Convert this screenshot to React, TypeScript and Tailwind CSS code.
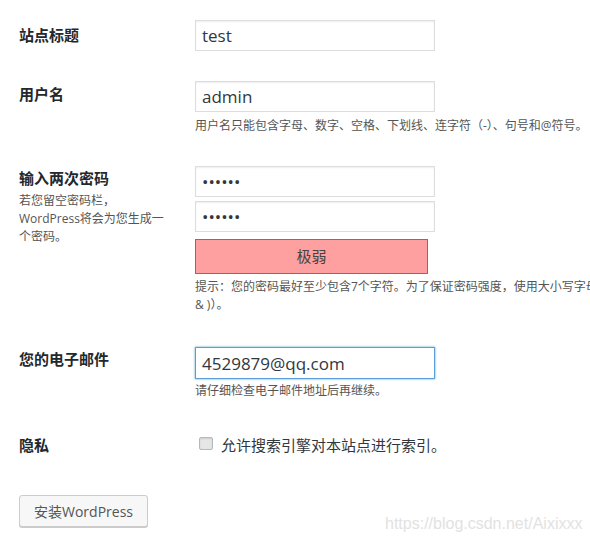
import React from 'react';

const font = { fontFamily: '"Open Sans", "Noto Sans CJK SC", sans-serif' };

function TextInput({ value, type = 'text', focused = false, h = 'h-[31px]' }: { value: string; type?: string; focused?: boolean; h?: string }) {
  return (
    <input
      type={type}
      defaultValue={value}
      readOnly
      className={`block w-[240px] ${h} px-[6px] text-[17px] text-[#32373c] bg-white outline-none border ${
        focused
          ? 'border-[#5b9dd9] shadow-[0_0_2px_rgba(30,140,190,0.8)]'
          : 'border-[#dddddd] shadow-[inset_0_1px_2px_rgba(0,0,0,0.07)]'
      }`}
      style={font}
    />
  );
}

export default function App() {
  return (
    <div className="relative w-[590px] h-[542px] overflow-hidden bg-white text-[#32373c]" style={font}>
      <div className="pl-[19px]">
        {/* 站点标题 */}
        <div className="flex pt-[20px]">
          <div className="w-[176px] shrink-0 pt-[5px] text-[15px] leading-[21px] font-bold text-[#23282d]">站点标题</div>
          <TextInput value="test" />
        </div>

        {/* 用户名 */}
        <div className="flex mt-[30px]">
          <div className="w-[176px] shrink-0 pt-[3px] text-[15px] leading-[21px] font-bold text-[#23282d]">用户名</div>
          <div>
            <TextInput value="admin" />
            <p className="mt-[5px] text-[12px] leading-[18px] text-[#555] whitespace-nowrap">
              用户名只能包含字母、数字、空格、下划线、连字符（-）、句号和@符号。
            </p>
          </div>
        </div>

        {/* 密码 */}
        <div className="flex mt-[31px]">
          <div className="w-[176px] shrink-0 pt-[2px]">
            <div className="text-[15px] leading-[21px] font-bold text-[#23282d]">输入两次密码</div>
            <p className="mt-[3px] text-[12px] leading-[18px] text-[#555]">
              若您留空密码栏，
              <br />
              WordPress将会为您生成一
              <br />
              个密码。
            </p>
          </div>
          <div>
            <TextInput value="123456" type="password" />
            <div className="mt-[4px]">
              <TextInput value="123456" type="password" />
            </div>
            <div className="mt-[7px] w-[233px] h-[35px] flex items-center justify-center bg-[#ffa0a0] border border-[#f04040] text-[15px] text-[#444]">
              极弱
            </div>
            <p className="mt-[4px] text-[12px] leading-[18px] text-[#555] whitespace-nowrap">
              提示：您的密码最好至少包含7个字符。为了保证密码强度，使用大小写字母、数字和符号（例如! " ? $ % ^
              <br />& )）。
            </p>
          </div>
        </div>

        {/* 电子邮件 */}
        <div className="flex mt-[33px]">
          <div className="w-[176px] shrink-0 pt-[2px] text-[15px] leading-[21px] font-bold text-[#23282d]">您的电子邮件</div>
          <div>
            <TextInput value="4529879@qq.com" focused h="h-[32px]" />
            <p className="mt-[3px] text-[12px] leading-[18px] text-[#555]">请仔细检查电子邮件地址后再继续。</p>
          </div>
        </div>

        {/* 隐私 */}
        <div className="flex mt-[35px]">
          <div className="w-[176px] shrink-0 text-[15px] leading-[21px] font-bold text-[#23282d]">隐私</div>
          <label className="flex items-center pl-[4px] text-[15px] leading-[21px] text-[#32373c]">
            <span className="block w-[14px] h-[13px] -mt-[5px] rounded-[2px] border border-[#b4b9be] bg-[#e6e6e6] shadow-[inset_0_1px_2px_rgba(0,0,0,0.1)]" />
            <span className="ml-[8px]">允许搜索引擎对本站点进行索引。</span>
          </label>
        </div>

        <button className="mt-[39px] block w-[129px] h-[32px] rounded-[3px] border border-[#cccccc] bg-[#f7f7f7] shadow-[0_1px_0_#cccccc] text-[14px] text-[#555]" style={font}>
          安装WordPress
        </button>
      </div>

      <div
        className="absolute left-[385px] top-[514px] text-[16px] leading-[20px] text-[#e2e2e2] whitespace-nowrap"
        style={{ fontFamily: '"Liberation Sans", Arial, sans-serif' }}
      >
        https://blog.csdn.net/Aixixxx
      </div>
    </div>
  );
}
